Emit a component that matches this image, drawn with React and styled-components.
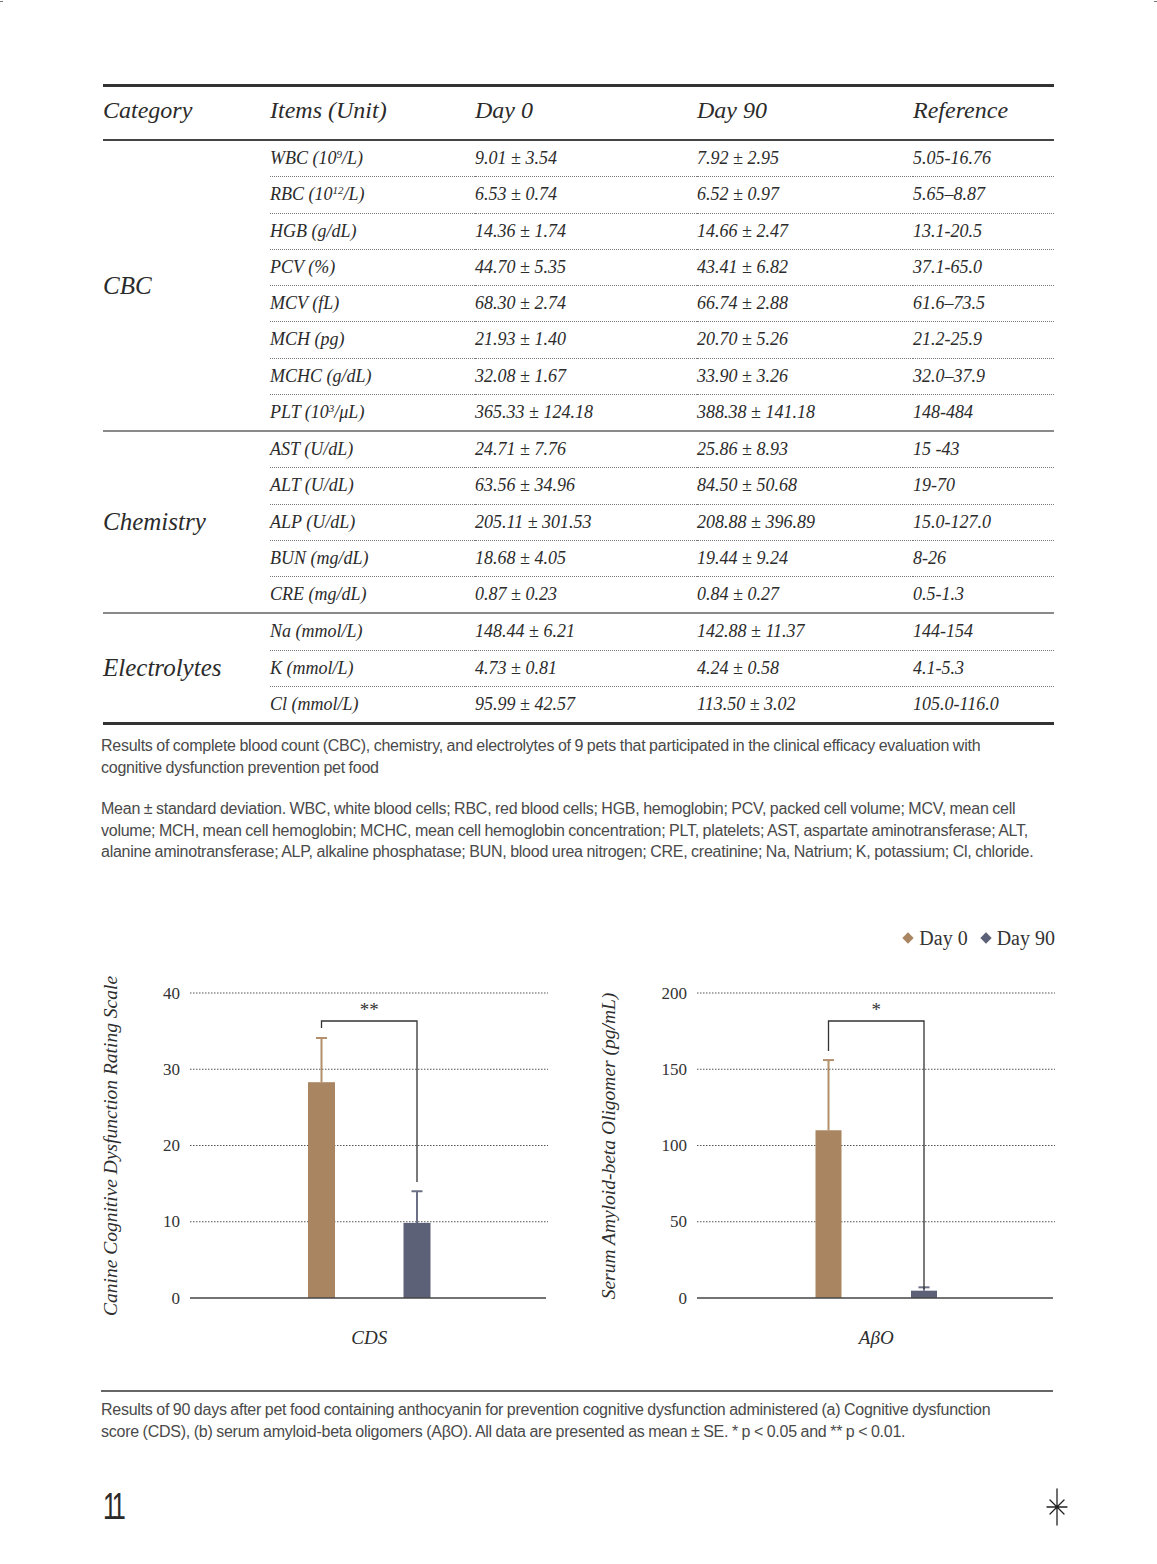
import React from "react";
import styled, { createGlobalStyle } from "styled-components";

const GlobalStyle = createGlobalStyle`
  body {
    margin: 0;
    background: #ffffff;
  }
`;

// table data, grouped by category
const groups = [
  {
    name: "CBC",
    rows: [
      [["WBC (10", "9", "/L)"], "9.01 ± 3.54", "7.92 ± 2.95", "5.05-16.76"],
      [["RBC (10", "12", "/L)"], "6.53 ± 0.74", "6.52 ± 0.97", "5.65–8.87"],
      ["HGB (g/dL)", "14.36 ± 1.74", "14.66 ± 2.47", "13.1-20.5"],
      ["PCV (%)", "44.70 ± 5.35", "43.41 ± 6.82", "37.1-65.0"],
      ["MCV (fL)", "68.30 ± 2.74", "66.74 ± 2.88", "61.6–73.5"],
      ["MCH (pg)", "21.93 ± 1.40", "20.70 ± 5.26", "21.2-25.9"],
      ["MCHC (g/dL)", "32.08 ± 1.67", "33.90 ± 3.26", "32.0–37.9"],
      [["PLT (10", "3", "/μL)"], "365.33 ± 124.18", "388.38 ± 141.18", "148-484"],
    ],
  },
  {
    name: "Chemistry",
    rows: [
      ["AST (U/dL)", "24.71 ± 7.76", "25.86 ± 8.93", "15 -43"],
      ["ALT (U/dL)", "63.56 ± 34.96", "84.50 ± 50.68", "19-70"],
      ["ALP (U/dL)", "205.11 ± 301.53", "208.88 ± 396.89", "15.0-127.0"],
      ["BUN (mg/dL)", "18.68 ± 4.05", "19.44 ± 9.24", "8-26"],
      ["CRE (mg/dL)", "0.87 ± 0.23", "0.84 ± 0.27", "0.5-1.3"],
    ],
  },
  {
    name: "Electrolytes",
    rows: [
      ["Na (mmol/L)", "148.44 ± 6.21", "142.88 ± 11.37", "144-154"],
      ["K (mmol/L)", "4.73 ± 0.81", "4.24 ± 0.58", "4.1-5.3"],
      ["Cl (mmol/L)", "95.99 ± 42.57", "113.50 ± 3.02", "105.0-116.0"],
    ],
  },
];

const TAN = "#a98561";
const SLATE = "#5c6177";

const charts = [
  {
    title: "Canine Cognitive Dysfunction Rating Scale",
    titleX: 15,
    plotLeft: 95,
    max: 40,
    ticks: [0, 10, 20, 30, 40],
    bars: [
      { value: 28.3, err: 34.1, color: TAN, errColor: "#b38f6c" },
      { value: 9.85, err: 14, color: SLATE, errColor: "#6b7086" },
    ],
    barWidth: 27,
    bracket: { top: 55, left: 62, right: 216 },
    stars: "**",
    label: "CDS",
  },
  {
    title: "Serum Amyloid-beta Oligomer (pg/mL)",
    titleX: 18,
    plotLeft: 107,
    max: 200,
    ticks: [0, 50, 100, 150, 200],
    bars: [
      { value: 110, err: 156, color: TAN, errColor: "#b38f6c" },
      { value: 4.8, err: 7, color: SLATE, errColor: "#6b7086" },
    ],
    barWidth: 26,
    bracket: { top: 55, left: 85, right: 323 },
    stars: "*",
    label: "AβO",
  },
];

export default function App() {
  return (
    <>
      <GlobalStyle />
      <Page>
        <CornerMark $side="left" />
        <CornerMark $side="right" />
        <Content>
          <Table>
            <colgroup>
              <col style={{ width: 167 }} />
              <col style={{ width: 205 }} />
              <col style={{ width: 222 }} />
              <col style={{ width: 216 }} />
              <col style={{ width: 141 }} />
            </colgroup>
            <thead>
              <tr>
                <HeadCell>Category</HeadCell>
                <HeadCell>Items (Unit)</HeadCell>
                <HeadCell>Day 0</HeadCell>
                <HeadCell>Day 90</HeadCell>
                <HeadCell>Reference</HeadCell>
              </tr>
            </thead>
            <tbody>
              {groups.map((group, gi) =>
                group.rows.map((row, ri) => {
                  const last = ri === group.rows.length - 1;
                  const [item, ...values] = row;
                  return (
                    <Row key={group.name + ri} $groupStart={gi > 0 && ri === 0}>
                      {ri === 0 && (
                        <CategoryCell rowSpan={group.rows.length}>
                          {group.name}
                        </CategoryCell>
                      )}
                      <Cell $last={last}>
                        {Array.isArray(item) ? (
                          <>
                            {item[0]}
                            <Sup>{item[1]}</Sup>
                            {item[2]}
                          </>
                        ) : (
                          item
                        )}
                      </Cell>
                      {values.map((v, vi) => (
                        <Cell key={vi} $last={last}>
                          {v}
                        </Cell>
                      ))}
                    </Row>
                  );
                })
              )}
            </tbody>
          </Table>

          <Caption $top={10}>
            Results of complete blood count (CBC), chemistry, and electrolytes of 9 pets that participated in the clinical efficacy evaluation with
            <br />
            cognitive dysfunction prevention pet food
          </Caption>
          <Caption $top={19} $lineHeight={21.5}>
            Mean ± standard deviation. WBC, white blood cells; RBC, red blood cells; HGB, hemoglobin; PCV, packed cell volume; MCV, mean cell
            <br />
            volume; MCH, mean cell hemoglobin; MCHC, mean cell hemoglobin concentration; PLT, platelets; AST, aspartate aminotransferase; ALT,
            <br />
            alanine aminotransferase; ALP, alkaline phosphatase; BUN, blood urea nitrogen; CRE, creatinine; Na, Natrium; K, potassium; Cl, chloride.
          </Caption>

          <Legend>
            <LegendItem>
              <Diamond $color={TAN} />
              Day 0
            </LegendItem>
            <LegendItem>
              <Diamond $color={SLATE} />
              Day 90
            </LegendItem>
          </Legend>

          <ChartRow>
            {charts.map((c) => (
              <BarChart key={c.label} chart={c} />
            ))}
          </ChartRow>

          <Rule />
          <Caption $top={7}>
            Results of 90 days after pet food containing anthocyanin for prevention cognitive dysfunction administered (a) Cognitive dysfunction
            <br />
            score (CDS), (b) serum amyloid-beta oligomers (AβO). All data are presented as mean ± SE. * p &lt; 0.05 and ** p &lt; 0.01.
          </Caption>

          <Footer>
            <PageNumber>11</PageNumber>
            <Star />
          </Footer>
        </Content>
      </Page>
    </>
  );
}

function BarChart({ chart }) {
  const base = 332;
  const span = 305;
  const y = (v) => base - (v * span) / chart.max;
  const left = chart.plotLeft;
  const right = left + 358;
  const centers = [left + 131.5, left + 227];

  return (
    <ChartSvg width="470" height="390" viewBox="0 0 470 390">
      <text
        x={chart.titleX}
        y={180}
        transform={`rotate(-90 ${chart.titleX} 180)`}
        textAnchor="middle"
        dominantBaseline="central"
        fontFamily="'Liberation Serif', serif"
        fontStyle="italic"
        fontSize="19.5"
        fill="#2e2e2e"
      >
        {chart.title}
      </text>

      {chart.ticks.map((t) => (
        <g key={t}>
          <text
            x={left - 10}
            y={y(t)}
            textAnchor="end"
            dominantBaseline="central"
            fontFamily="'Liberation Serif', serif"
            fontSize="17"
            fill="#333"
          >
            {t}
          </text>
          {t > 0 && (
            <line
              x1={left}
              x2={right}
              y1={y(t)}
              y2={y(t)}
              stroke="#555"
              strokeWidth="1.2"
              strokeDasharray="1.5 1.5"
            />
          )}
        </g>
      ))}

      {chart.bars.map((b, i) => (
        <g key={i}>
          <line
            x1={centers[i]}
            x2={centers[i]}
            y1={y(b.value)}
            y2={y(b.err)}
            stroke={b.errColor}
            strokeWidth="2"
          />
          <line
            x1={centers[i] - 5.5}
            x2={centers[i] + 5.5}
            y1={y(b.err)}
            y2={y(b.err)}
            stroke={b.errColor}
            strokeWidth="2"
          />
          <rect
            x={centers[i] - chart.barWidth / 2}
            y={y(b.value)}
            width={chart.barWidth}
            height={base - y(b.value)}
            fill={b.color}
          />
        </g>
      ))}

      <line x1={left} x2={right - 2} y1={base} y2={base} stroke="#444" strokeWidth="1.5" />

      <path
        d={`M ${centers[0]} ${chart.bracket.left} V ${chart.bracket.top} H ${centers[1]} V ${chart.bracket.right}`}
        fill="none"
        stroke="#333"
        strokeWidth="1.3"
      />
      <text
        x={(centers[0] + centers[1]) / 2}
        y={50}
        textAnchor="middle"
        fontFamily="'Liberation Serif', serif"
        fontSize="19"
        fill="#333"
      >
        {chart.stars}
      </text>

      <text
        x={(centers[0] + centers[1]) / 2}
        y={371}
        textAnchor="middle"
        dominantBaseline="central"
        fontFamily="'Liberation Serif', serif"
        fontStyle="italic"
        fontSize="19"
        fill="#2e2e2e"
      >
        {chart.label}
      </text>
    </ChartSvg>
  );
}

function Star() {
  return (
    <StarSvg width="24" height="38" viewBox="0 0 24 38">
      <g stroke="#222" strokeWidth="1.3" strokeLinecap="round">
        <line x1="12" y1="1" x2="12" y2="37" />
        <line x1="2" y1="19" x2="22" y2="19" />
        <line x1="5" y1="12" x2="19" y2="26" />
        <line x1="19" y1="12" x2="5" y2="26" />
      </g>
      <circle cx="12" cy="19" r="1.8" fill="#222" />
    </StarSvg>
  );
}

const Page = styled.div`
  position: relative;
  width: 1157px;
  min-height: 1564px;
  padding-top: 84px;
  box-sizing: border-box;
  background: #fff;
`;

const CornerMark = styled.span`
  position: absolute;
  top: 1px;
  ${(p) => (p.$side === "left" ? "left: 0;" : "right: 0;")}
  width: 3px;
  height: 1px;
  background: #777;
`;

const Content = styled.div`
  margin-left: 101px;
  width: 954px;
`;

const Table = styled.table`
  width: 951px;
  margin-left: 2px;
  border-collapse: collapse;
  table-layout: fixed;
  font-family: "Liberation Serif", serif;
  font-style: italic;
  color: #2b2b2b;
  border-top: 3px solid #333;
  border-bottom: 3px solid #333;
`;

const HeadCell = styled.th`
  height: 47px;
  padding: 0 0 5px;
  text-align: left;
  vertical-align: middle;
  font-size: 24px;
  font-weight: normal;
  border-bottom: 2px solid #444;
`;

const Row = styled.tr`
  border-top: ${(p) => (p.$groupStart ? "2px solid #8a8a8a" : "none")};
`;

const CategoryCell = styled.td`
  padding: 0;
  vertical-align: middle;
  font-size: 25px;
`;

const Cell = styled.td`
  height: 35.25px;
  padding: 0;
  vertical-align: middle;
  font-size: 18px;
  white-space: nowrap;
  border-bottom: ${(p) => (p.$last ? "none" : "1px dotted #7a7a7a")};
`;

const Sup = styled.sup`
  font-size: 11px;
  line-height: 0;
  vertical-align: 6px;
`;

const Caption = styled.p`
  margin: ${(p) => p.$top}px 0 0;
  font-family: "Liberation Sans", Arial, sans-serif;
  font-size: 16px;
  line-height: ${(p) => p.$lineHeight || 22}px;
  letter-spacing: -0.25px;
  word-spacing: -0.5px;
  color: #4a4a4a;
  white-space: nowrap;
`;

const Legend = styled.div`
  display: flex;
  justify-content: flex-end;
  gap: 14px;
  margin-top: 64px;
  font-family: "Liberation Serif", serif;
  font-size: 20px;
  line-height: 22px;
  color: #333;
`;

const LegendItem = styled.div`
  display: flex;
  align-items: center;
  gap: 7px;
`;

const Diamond = styled.span`
  width: 8px;
  height: 8px;
  background: ${(p) => p.$color};
  transform: rotate(45deg);
`;

const ChartRow = styled.div`
  display: flex;
  gap: 25px;
  margin-top: 17px;
  margin-left: -6px;
`;

const ChartSvg = styled.svg`
  display: block;
  flex: none;
`;

const Rule = styled.div`
  margin-top: 34px;
  height: 2px;
  width: 952px;
  background: #666;
`;

const Footer = styled.div`
  display: flex;
  justify-content: space-between;
  align-items: center;
  margin-top: 44px;
  padding-left: 2px;
`;

const PageNumber = styled.div`
  font-family: "Liberation Sans Narrow", "Liberation Sans", sans-serif;
  font-size: 36px;
  line-height: 40px;
  letter-spacing: -5px;
  color: #2a2a2a;
  transform: scaleX(0.7);
  transform-origin: left center;
`;

const StarSvg = styled.svg`
  display: block;
  margin-right: -14px;
`;
